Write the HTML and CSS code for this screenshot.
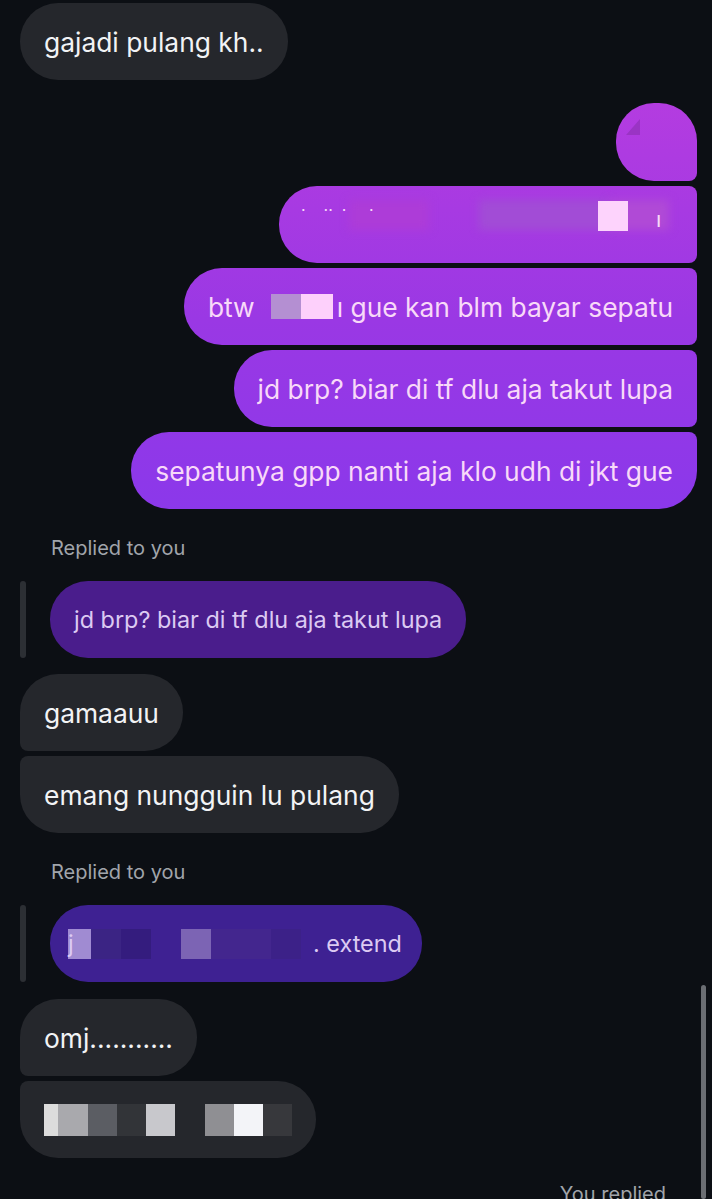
FILE: index.html
```html
<!DOCTYPE html>
<html lang="en">
<head>
    <meta charset="UTF-8">
    <meta name="viewport" content="width=device-width, initial-scale=1.0">
    <title>Chat</title>
    <link rel="stylesheet" href="styles.css">
</head>
<body>
    <div class="thread">
        <div class="group in-group first-group">
            <div class="bubble in single-top">gajadi pulang kh..</div>
        </div>

        <div class="group out-group">
            <div class="bubble out first small"><span class="smudge"></span></div>
            <div class="bubble out mid blurred">
                <span class="blur b1"></span><span class="blur b2"></span><span class="blur b3"></span>
                <span class="dots">·&nbsp;&nbsp;&nbsp;&nbsp;··&nbsp;&nbsp;·&nbsp;&nbsp;&nbsp;&nbsp;&nbsp;·</span>
                <span class="pink-box"></span><span class="tail">ı</span>
            </div>
            <div class="bubble out mid">btw <span class="mask"><span class="m-gray"></span><span class="m-pink"></span></span>ı gue kan blm bayar sepatu</div>
            <div class="bubble out mid">jd brp? biar di tf dlu aja takut lupa</div>
            <div class="bubble out last">sepatunya gpp nanti aja klo udh di jkt gue</div>
        </div>

        <div class="reply-label">Replied to you</div>
        <div class="quote-row">
            <div class="quote-bar"></div>
            <div class="quote q1">jd brp? biar di tf dlu aja takut lupa</div>
        </div>

        <div class="group in-group">
            <div class="bubble in first">gamaauu</div>
            <div class="bubble in last">emang nungguin lu pulang</div>
        </div>

        <div class="reply-label">Replied to you</div>
        <div class="quote-row">
            <div class="quote-bar"></div>
            <div class="quote q2">
                <span class="qm qa">j</span><span class="qm qb"></span><span class="qm qc"></span><span class="qm qd"></span><span class="qm qe"></span><span class="qm qf"></span><span class="qm qg"></span><span class="qtext">. extend</span>
            </div>
        </div>

        <div class="group in-group low">
            <div class="bubble in first">omj...........</div>
            <div class="bubble in last censored">
                <span class="c c0"></span><span class="c c1"></span><span class="c c2"></span><span class="c c3"></span><span class="c c4"></span><span class="c gap"></span><span class="c c5"></span><span class="c c6"></span><span class="c c7"></span>
            </div>
        </div>

        <div class="you-replied">You replied</div>
    </div>
    <div class="scrollbar"></div>
</body>
</html>
```

FILE: styles.css
```css
body {
    margin: 0;
    background-color: #0c0f14;
    font-family: Inter, "Noto Sans", sans-serif;
    overflow: hidden;
}

.thread {
    display: flex;
    flex-direction: column;
    padding: 3px 15px 0 20px;
}

.group {
    display: flex;
    flex-direction: column;
    gap: 5px;
}

.in-group {
    align-items: flex-start;
    margin-top: 16px;
}

.in-group.low {
    margin-top: 17px;
}

.first-group {
    margin-top: 0;
}

.out-group {
    align-items: flex-end;
    margin-top: 23px;
}

.bubble {
    position: relative;
    display: flex;
    align-items: center;
    height: 77px;
    box-sizing: border-box;
    padding: 0 24px;
    font-size: 26.4px;
    white-space: nowrap;
    border-radius: 38px;
}

.in {
    background-color: #25272c;
    color: #f2f3f5;
}

.in.first {
    border-bottom-left-radius: 8px;
}

.in.last {
    border-top-left-radius: 8px;
}

.out {
    color: #f8d9f8;
    background-image: linear-gradient(180deg, #b43ce0 100px, #9a38e4 320px, #8b38ea 510px);
    background-attachment: fixed;
    border-top-right-radius: 8px;
    border-bottom-right-radius: 8px;
}

.out.first {
    border-top-right-radius: 38px;
}

.out.last {
    border-bottom-right-radius: 38px;
}

.out.small {
    width: 81px;
    height: 78px;
}

.smudge {
    position: absolute;
    left: 10px;
    top: 16px;
    width: 14px;
    height: 16px;
    background-color: #9a34c4;
    clip-path: polygon(100% 0, 100% 100%, 0 100%);
}

.blurred {
    width: 418px;
}

.blur {
    position: absolute;
    height: 30px;
    top: 14px;
    filter: blur(4px);
}

.b1 { left: 70px; width: 80px; background-color: #ad3cd8; }
.b2 { left: 200px; width: 130px; background-color: #a24cd6; }
.b3 { left: 330px; width: 60px; background-color: #b04ad6; }

.dots {
    position: absolute;
    left: 22px;
    top: 14px;
    font-size: 16px;
    color: #f8d9f8;
}

.pink-box {
    position: absolute;
    left: 319px;
    top: 15px;
    width: 30px;
    height: 30px;
    background-color: #fdd3fc;
}

.tail {
    position: absolute;
    left: 377px;
    top: 20px;
    font-size: 22px;
}

.mask {
    display: inline-flex;
    margin: 0 4px 0 16px;
    height: 25px;
}

.m-gray {
    width: 30px;
    background-color: #b48fd2;
}

.m-pink {
    width: 32px;
    background-color: #fdd0fb;
}

.reply-label {
    margin: 26px 0 0 31px;
    font-size: 20px;
    color: #a1a5ab;
    line-height: 26px;
}

.quote-row {
    display: flex;
    gap: 24px;
    margin-top: 20px;
}

.quote-bar {
    width: 6px;
    height: 77px;
    border-radius: 3px;
    background-color: #2c2f34;
}

.quote {
    display: flex;
    align-items: center;
    height: 77px;
    box-sizing: border-box;
    padding: 0 24px;
    border-radius: 38px;
    font-size: 23.4px;
    white-space: nowrap;
}

.q1 {
    background-color: #4a1d8c;
    color: #dccaf2;
}

.q2 {
    width: 372px;
    background-color: #3e2192;
    color: #dccaf2;
    padding: 0 18px;
}

.qm {
    display: inline-block;
    height: 30px;
}

.qa { width: 23px; background-color: #a08bd2; color: #dccaf2; line-height: 30px; }
.qb { width: 30px; background-color: #3b2484; }
.qc { width: 30px; background-color: #341c7e; }
.qd { width: 30px; background-color: #3e2192; }
.qe { width: 30px; background-color: #7c64b4; }
.qf { width: 60px; background-color: #43268e; }
.qg { width: 30px; background-color: #3c2188; }

.qtext {
    margin-left: 12px;
}

.censored {
    width: 296px;
    padding: 0 24px;
}

.c {
    display: inline-block;
    height: 32px;
}

.c0 { width: 15px; background-color: #dcdcdc; }
.c1 { width: 31px; background-color: #a9a9ad; }
.c2 { width: 30px; background-color: #5b5d63; }
.c3 { width: 30px; background-color: #323438; }
.c4 { width: 30px; background-color: #c8c8cc; }
.gap { width: 31px; }
.c5 { width: 30px; background-color: #8f8f93; }
.c6 { width: 30px; background-color: #f3f4f8; }
.c7 { width: 30px; background-color: #37383c; }

.you-replied {
    align-self: flex-end;
    margin: 24px 31px 0 0;
    font-size: 20px;
    color: #a1a5ab;
}

.scrollbar {
    position: fixed;
    right: 6px;
    top: 985px;
    width: 5px;
    height: 214px;
    border-radius: 3px;
    background-color: #6b6e73;
}
```
